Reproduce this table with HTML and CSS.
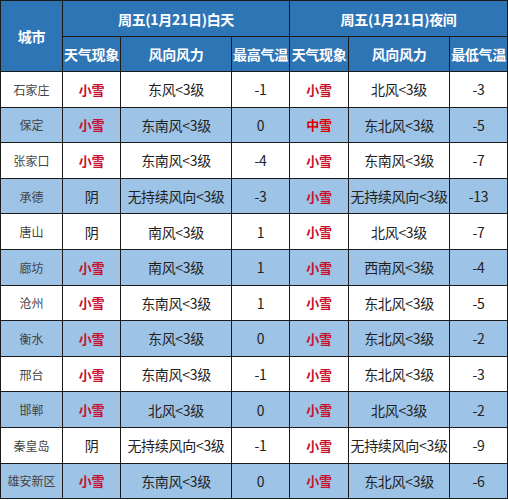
FILE: index.html
```html
<!DOCTYPE html>
<html lang="zh">
<head>
<meta charset="utf-8">
<link rel="stylesheet" href="styles.css">
</head>
<body>
<table class="wx">
  <colgroup>
    <col class="c-city"><col class="c-w"><col class="c-wind"><col class="c-t">
    <col class="c-w2"><col class="c-wind2"><col class="c-t">
  </colgroup>
  <thead>
    <tr class="h1">
      <th rowspan="2">城市</th>
      <th colspan="3">周五(1月21日)白天</th>
      <th colspan="3">周五(1月21日)夜间</th>
    </tr>
    <tr class="h2">
      <th>天气现象</th><th>风向风力</th><th>最高气温</th>
      <th>天气现象</th><th>风向风力</th><th>最低气温</th>
    </tr>
  </thead>
  <tbody>
    <tr><td class="city">石家庄</td><td class="snow">小雪</td><td>东风&lt;3级</td><td>-1</td><td class="snow">小雪</td><td>北风&lt;3级</td><td>-3</td></tr>
    <tr><td class="city">保定</td><td class="snow">小雪</td><td>东南风&lt;3级</td><td>0</td><td class="snow mid">中雪</td><td>东北风&lt;3级</td><td>-5</td></tr>
    <tr><td class="city">张家口</td><td class="snow">小雪</td><td>东南风&lt;3级</td><td>-4</td><td class="snow">小雪</td><td>东南风&lt;3级</td><td>-7</td></tr>
    <tr><td class="city">承德</td><td class="cloud">阴</td><td>无持续风向&lt;3级</td><td>-3</td><td class="snow">小雪</td><td>无持续风向&lt;3级</td><td>-13</td></tr>
    <tr><td class="city">唐山</td><td class="cloud">阴</td><td>南风&lt;3级</td><td>1</td><td class="snow">小雪</td><td>北风&lt;3级</td><td>-7</td></tr>
    <tr><td class="city">廊坊</td><td class="snow">小雪</td><td>南风&lt;3级</td><td>1</td><td class="snow">小雪</td><td>西南风&lt;3级</td><td>-4</td></tr>
    <tr><td class="city">沧州</td><td class="snow">小雪</td><td>东南风&lt;3级</td><td>1</td><td class="snow">小雪</td><td>东北风&lt;3级</td><td>-5</td></tr>
    <tr><td class="city">衡水</td><td class="snow">小雪</td><td>东风&lt;3级</td><td>0</td><td class="snow">小雪</td><td>东北风&lt;3级</td><td>-2</td></tr>
    <tr><td class="city">邢台</td><td class="snow">小雪</td><td>东南风&lt;3级</td><td>-1</td><td class="snow">小雪</td><td>东北风&lt;3级</td><td>-3</td></tr>
    <tr><td class="city">邯郸</td><td class="snow">小雪</td><td>北风&lt;3级</td><td>0</td><td class="snow">小雪</td><td>北风&lt;3级</td><td>-2</td></tr>
    <tr><td class="city">秦皇岛</td><td class="cloud">阴</td><td>无持续风向&lt;3级</td><td>-1</td><td class="snow">小雪</td><td>无持续风向&lt;3级</td><td>-9</td></tr>
    <tr><td class="city">雄安新区</td><td class="snow">小雪</td><td>东南风&lt;3级</td><td>0</td><td class="snow">小雪</td><td>东北风&lt;3级</td><td>-6</td></tr>
  </tbody>
</table>
</body>
</html>
```
FILE: styles.css
```css
html, body {
  margin: 0;
  padding: 0;
  background: #ffffff;
}
body {
  font-family: "Noto Sans CJK SC", "Noto Sans", sans-serif;
}
.wx {
  border-collapse: collapse;
  table-layout: fixed;
  width: 507px;
}
.c-city { width: 62px; }
.c-w { width: 58px; }
.c-wind { width: 111px; }
.c-t { width: 58px; }
.c-w2 { width: 59px; }
.c-wind2 { width: 101px; }
.wx th, .wx td {
  border: 1px solid #1a1a1a;
  padding: 0;
  text-align: center;
  vertical-align: middle;
  white-space: nowrap;
  overflow: hidden;
}
.wx th {
  background: #2e75b6;
  color: #ffffff;
  font-weight: bold;
  font-size: 14px;
  letter-spacing: -0.3px;
}
.h1 { height: 36px; }
.h2 { height: 35px; }
.wx tbody tr { height: 35.6px; }
.wx tbody tr:nth-child(even) td { background: #9dc3e6; }
.wx td {
  font-size: 14px;
  color: #222222;
  letter-spacing: -0.3px;
}
.wx td.city {
  font-size: 12px;
  color: #444444;
  letter-spacing: 0;
}
.wx td.snow {
  color: #c8102e;
  font-weight: bold;
  font-size: 13px;
}
.wx td.snow.mid {
  color: #e00000;
}
.wx td.cloud {
  font-size: 14px;
  color: #222222;
}
```
